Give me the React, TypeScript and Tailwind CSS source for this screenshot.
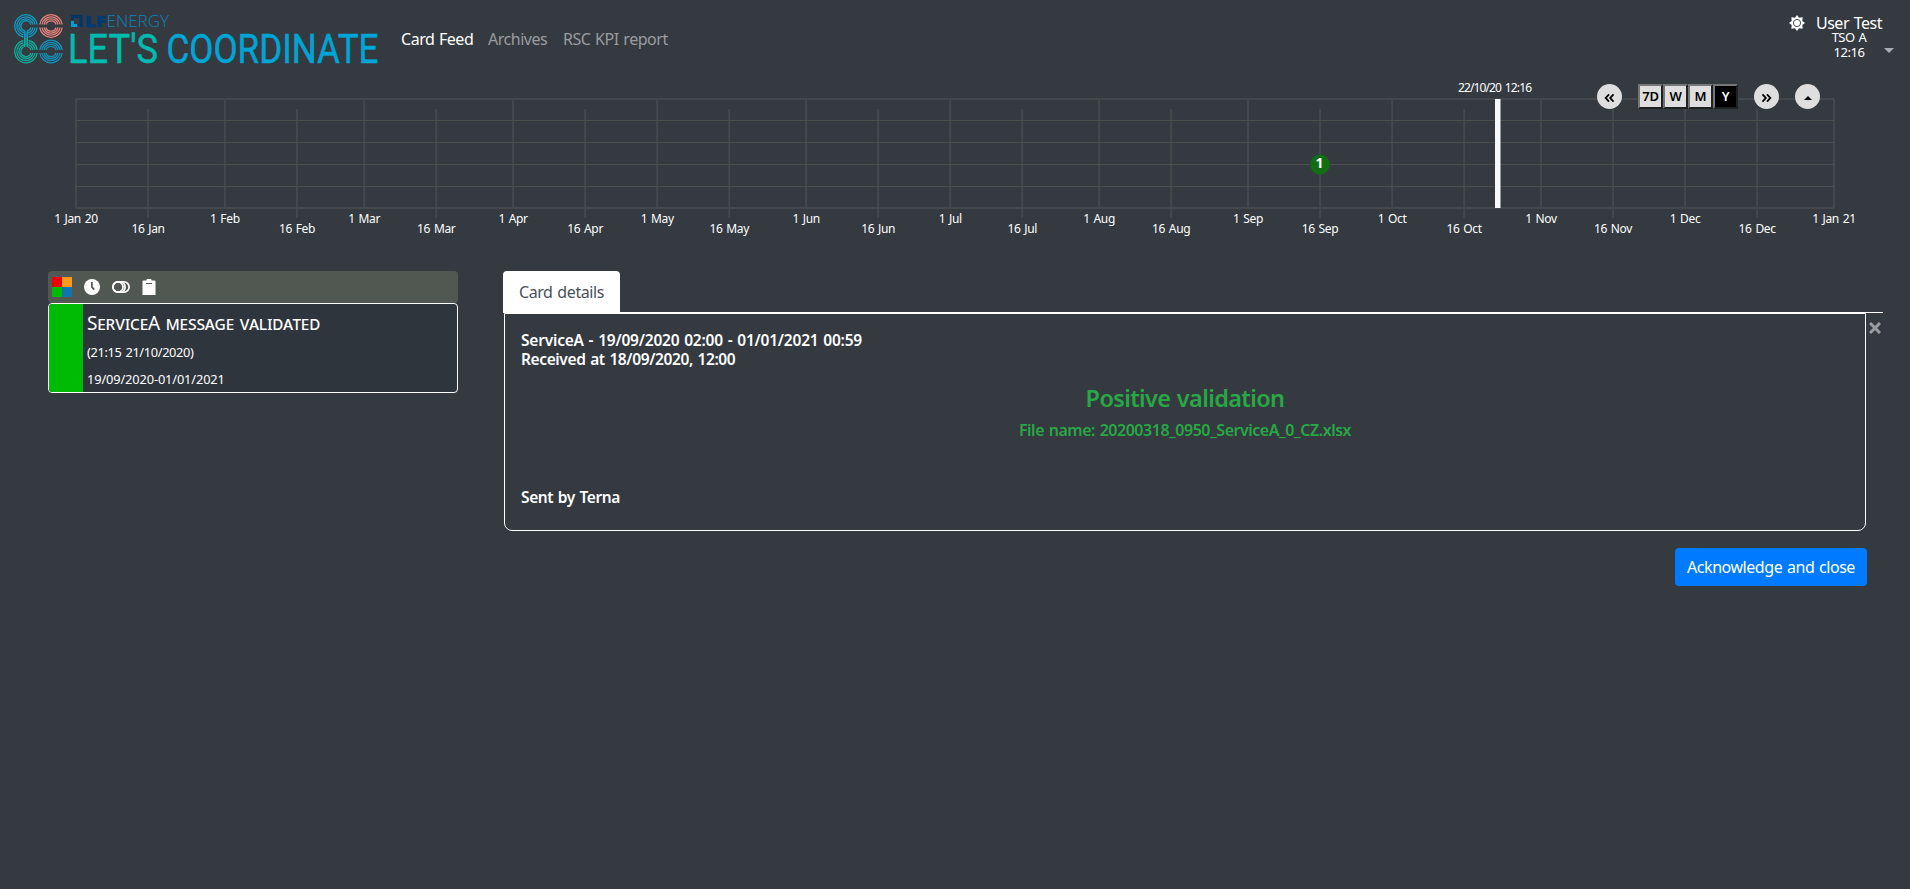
import React from 'react';

const MONTHS = ['Jan', 'Feb', 'Mar', 'Apr', 'May', 'Jun', 'Jul', 'Aug', 'Sep', 'Oct', 'Nov', 'Dec'];
const DAYS = [31, 29, 31, 30, 31, 30, 31, 31, 30, 31, 30, 31];
const LEFT = 76;
const WIDTH = 1758;

type Tick = { x: number; label: string; low: boolean };

const ticks: Tick[] = [];
let elapsed = 0;
MONTHS.forEach((m, i) => {
  ticks.push({ x: LEFT + (elapsed / 366) * WIDTH, label: i === 0 ? '1 Jan 20' : `1 ${m}`, low: false });
  ticks.push({ x: LEFT + ((elapsed + 15) / 366) * WIDTH, label: `16 ${m}`, low: true });
  elapsed += DAYS[i];
});
ticks.push({ x: LEFT + WIDTH, label: '1 Jan 21', low: false });

const RINGS = [11.3, 9.2, 7.1, 5.2];

function Ring({ cx, cy, color }: { cx: number; cy: number; color: string }) {
  return (
    <g transform={`translate(${cx} ${cy})`} fill="none" stroke={color} strokeWidth="1.3">
      {RINGS.map((r) => {
        const y = 1.5;
        const x = Math.sqrt(r * r - y * y);
        return <path key={r} d={`M${-x} ${-y}A${r} ${r} 0 0 1 ${x} ${-y}M${-x} ${y}A${r} ${r} 0 0 0 ${x} ${y}`} />;
      })}
    </g>
  );
}

function OpenRing({ cx, cy, color, flip }: { cx: number; cy: number; color: string; flip: number }) {
  return (
    <g transform={`translate(${cx} ${cy}) scale(1 ${flip})`} fill="none" stroke={color} strokeWidth="1.3">
      {RINGS.map((r, i) => {
        const gx = i < 2 ? 2.6 : 1.2;
        const gy = Math.sqrt(r * r - gx * gx);
        const ry = 1.5;
        const rx = Math.sqrt(r * r - ry * ry);
        const stem = i > 1 ? 'V13' : '';
        const start = i > 1 ? `M${gx} 13V${gy}` : `M${gx} ${gy}`;
        return (
          <path key={r} d={`M${rx} ${-ry}A${r} ${r} 0 1 0 ${-gx} ${gy}${stem}${start}A${r} ${r} 0 0 0 ${rx} ${ry}`} />
        );
      })}
    </g>
  );
}

function Logo() {
  return (
    <svg width="380" height="80" viewBox="0 0 380 80" className="shrink-0">
      <OpenRing cx={26} cy={26} color="#0f9bc4" flip={1} />
      <Ring cx={51} cy={26} color="#e8837a" />
      <OpenRing cx={26} cy={51.5} color="#0fae9f" flip={-1} />
      <Ring cx={51} cy={51.5} color="#1590ba" />
      <path d="M71 20V15H82.500V27H78V24H79.500V18H74V20Z" fill="#003466" />
      <path d="M71 21H74V24H77V27H71Z" fill="#009bdb" />
      <text x="85" y="27" fontSize="16.500" fontWeight="800" fill="#003a70" stroke="#003a70" strokeWidth="0.600" textLength="21" lengthAdjust="spacingAndGlyphs" className="font-['Open_Sans']">LF</text>
      <text x="106.500" y="27" fontSize="16.500" fontWeight="300" fill="#0f80b8" textLength="62.500" lengthAdjust="spacingAndGlyphs" className="font-['Open_Sans']">ENERGY</text>
      <text x="68" y="63" fontSize="40" fill="#00bbae" stroke="#00bbae" strokeWidth="0.500" textLength="90" lengthAdjust="spacingAndGlyphs" className="font-['Roboto']">LET'S</text>
      <text x="166.500" y="63" fontSize="40" fill="#00a5d5" stroke="#00a5d5" strokeWidth="0.500" textLength="212" lengthAdjust="spacingAndGlyphs" className="font-['Roboto']">COORDINATE</text>
    </svg>
  );
}

function Gear() {
  return (
    <svg width="16" height="16" viewBox="-8 -8 16 16">
      <path
        fill="#fff"
        d="M0-8 2-5.300 5.660-5.660 5.300-2 8 0 5.300 2 5.660 5.660 2 5.300 0 8-2 5.300-5.660 5.660-5.300 2-8 0-5.300-2-5.660-5.660-2-5.300Z"
      />
      <circle r="3.600" fill="none" stroke="#343a40" strokeWidth="0.900" />
    </svg>
  );
}

function Header() {
  return (
    <header className="flex h-20 items-start">
      <Logo />
      <nav className="flex gap-4 pt-[27px] pl-[21px] text-base leading-6 tracking-[-0.480px] [word-spacing:1px]">
        <a className="w-[71px] whitespace-nowrap text-white">Card Feed</a>
        <a className="w-[59px] whitespace-nowrap text-[#9a9c9f]">Archives</a>
        <a className="whitespace-nowrap text-[#9a9c9f]">RSC KPI report</a>
      </nav>
      <div className="ml-auto flex items-start pr-4">
        <div className="pt-[15px]"><Gear /></div>
        <div className="ml-[11px] flex w-[66px] flex-col items-center pt-[11px] whitespace-nowrap text-white">
          <span className="text-base leading-6 tracking-[-0.480px] [word-spacing:1px]">User Test</span>
          <span className="-mt-[5px] text-[13px] leading-[15px] tracking-[-0.500px] [word-spacing:1px]">TSO A</span>
          <span className="text-[13px] leading-[15px] tracking-[-0.400px]">12:16</span>
        </div>
        <svg width="10" height="5" viewBox="0 0 10 5" className="mt-12 ml-[2px]"><path d="M0 0H10L5 5Z" fill="#aaacaf" /></svg>
      </div>
    </header>
  );
}

function Round({ children }: { children: React.ReactNode }) {
  return <button className="flex size-[25px] items-center justify-center rounded-full bg-[#dedede]">{children}</button>;
}

function Chevrons({ flip = false }: { flip?: boolean }) {
  return (
    <svg width="11" height="10" viewBox="0 0 11 10" className={flip ? 'mt-0.5 rotate-180' : 'mt-0.5'}>
      <path d="M5 1.300 1.700 5 5 8.700M9.500 1.300 6.200 5 9.500 8.700" fill="none" stroke="#000" strokeWidth="1.800" />
    </svg>
  );
}

function Timeline() {
  return (
    <section className="relative h-[170px]">
      <svg width="1910" height="170" viewBox="0 80 1910 170" className="block font-['Noto_Sans']">
        <g stroke="#45484a" strokeWidth="2">
          <path d="M76 99H1834M76 208H1834" />
          {ticks.map((t) => (
            <path key={t.label} d={t.low ? `M${t.x} 109V218` : `M${t.x} 99V208`} />
          ))}
        </g>
        <path d="M76 120.500H1834M76 142.500H1834M76 164.500H1834M76 186.500H1834" stroke="#4d4f4e" />
        <g fill="#fff" fontSize="12" textAnchor="middle" letterSpacing="-0.350" wordSpacing="1">
          {ticks.map((t) => (
            <text key={t.label} x={t.x} y={t.low ? 233 : 223}>{t.label}</text>
          ))}
        </g>
        <rect x="1495" y="99" width="5.500" height="109" fill="#f8f9fc" />
        <text x="1458" y="92" fontSize="12" fill="#fff" wordSpacing="1.500" textLength="74">22/10/20 12:16</text>
        <circle cx="1320" cy="164.500" r="10" fill="#126c12" />
        <text x="1319.500" y="168" fontSize="14" fontWeight="700" fill="#fff" textAnchor="middle">1</text>
      </svg>
      <div className="absolute top-1 right-[90px] flex">
        <Round><Chevrons /></Round>
        <div className="mx-4 flex text-[13px] font-semibold tracking-[-0.300px] text-black">
          {['7D', 'W', 'M', 'Y'].map((l) => (
            <button
              key={l}
              className={
                'flex h-[25px] w-[25px] items-center justify-center border-2 border-t-[#767676] border-r-[#212121] border-b-[#212121] border-l-[#767676] ' +
                (l === 'Y' ? 'bg-black text-white' : 'bg-[#dedede]')
              }
            >
              {l}
            </button>
          ))}
        </div>
        <Round><Chevrons flip /></Round>
        <div className="ml-4">
          <Round>
            <svg width="8" height="4" viewBox="0 0 8 4" className="mt-[3px]"><path d="M0 4H8L4 0Z" /></svg>
          </Round>
        </div>
      </div>
    </section>
  );
}

function Feed() {
  return (
    <aside className="w-[410px]">
      <div className="flex h-8 items-center rounded-[4px] bg-[#515751] pl-1">
        <svg width="20" height="20" viewBox="0 0 20 20">
          <path d="M0 0H10V10H0Z" fill="#f00000" />
          <path d="M10 0H20V10H10Z" fill="#ff9a1a" />
          <path d="M0 10H10V20H0Z" fill="#00bb03" />
          <path d="M10 10H20V20H10Z" fill="#1074ad" />
        </svg>
        <svg width="16" height="16" viewBox="0 0 16 16" className="ml-3">
          <circle cx="8" cy="8" r="8" fill="#fff" />
          <path d="M7.900 3V8.200L10.300 10.600" fill="none" stroke="#515751" strokeWidth="1.700" />
        </svg>
        <svg width="18" height="12" viewBox="0 0 18 12" className="ml-3" fill="none" stroke="#fff" strokeWidth="1.700">
          <rect x="0.900" y="0.900" width="16.200" height="10.200" rx="5.100" />
          <circle cx="6" cy="6" r="5.100" />
          <path d="M9 1A5.100 5.100 0 0 1 9 11" />
        </svg>
        <svg width="14" height="16" viewBox="0 0 14 16" className="ml-3">
          <path d="M1.500 1.500H4.500A2.500 2.500 0 0 1 9.500 1.500H12.500Q13.500 1.500 13.500 2.500V16H0.500V2.500Q0.500 1.500 1.500 1.500Z" fill="#fff" />
          <path d="M4 4.500H10" stroke="#515751" strokeWidth="1" />
        </svg>
      </div>
      <article className="flex h-[90px] overflow-hidden rounded-[4px] border border-white bg-[#2f353d] text-white">
        <div className="w-[34px] bg-[#00bb03]" />
        <div className="flex flex-col pl-1 whitespace-nowrap">
          <h2 className="pt-[6px] text-[19px] leading-[27px] tracking-[-0.150px] [font-variant:small-caps] [word-spacing:1px]">ServiceA message validated</h2>
          <p className="pt-[6px] text-[12.800px] leading-[19px] tracking-[-0.350px] [word-spacing:1px]">(21:15 21/10/2020)</p>
          <p className="pt-2 text-[12.800px] leading-[19px] tracking-[-0.120px]">19/09/2020-01/01/2021</p>
        </div>
      </article>
    </aside>
  );
}

function Details() {
  return (
    <main className="ml-[45px] w-[1380px]">
      <div className="flex border-b border-white">
        <div className="-mb-px flex h-[42px] w-[117px] items-center justify-center rounded-t-[4px] bg-white text-base tracking-[-0.400px] whitespace-nowrap text-[#495057] [word-spacing:1px]">
          Card details
        </div>
      </div>
      <div className="flex">
        <section className="ml-px h-[218px] w-[1362px] rounded-b-[8px] border border-white px-4 text-white">
          <div className="pt-[17px] text-[15.500px] leading-[19px] font-semibold [word-spacing:1px]">
            <p className="tracking-[-0.210px]">ServiceA - 19/09/2020 02:00 - 01/01/2021 00:59</p>
            <p className="tracking-[-0.380px]">Received at 18/09/2020, 12:00</p>
          </div>
          <h3 className="pt-[15px] text-center text-[23.500px] leading-[29px] font-semibold tracking-[-0.650px] text-[#28a745] [word-spacing:1px]">Positive validation</h3>
          <p className="pt-[5px] text-center text-base leading-6 font-semibold tracking-[-0.480px] text-[#28a745] [word-spacing:1px]">
            File name: 20200318_0950_ServiceA_0_CZ.xlsx
          </p>
          <p className="pt-[43px] text-[15.500px] leading-6 font-semibold tracking-[-0.400px] [word-spacing:1px]">Sent by Terna</p>
        </section>
        <svg width="12" height="12" viewBox="0 0 12 12" className="mt-[9px] ml-[3px]">
          <path d="M1 1 11 11M11 1 1 11" stroke="#9a9c9f" strokeWidth="3" />
        </svg>
      </div>
      <div className="flex justify-end pt-[17px] pr-4">
        <button className="h-[38px] w-[192px] rounded-[4px] bg-[#007bff] text-base tracking-[-0.450px] whitespace-nowrap text-white [word-spacing:1px]">
          Acknowledge and close
        </button>
      </div>
    </main>
  );
}

export default function App() {
  return (
    <div className="h-[889px] w-[1910px] overflow-hidden bg-[#343a40] font-['Noto_Sans','Open_Sans',sans-serif]">
      <Header />
      <Timeline />
      <div className="flex pt-[21px] pl-12">
        <Feed />
        <Details />
      </div>
    </div>
  );
}
